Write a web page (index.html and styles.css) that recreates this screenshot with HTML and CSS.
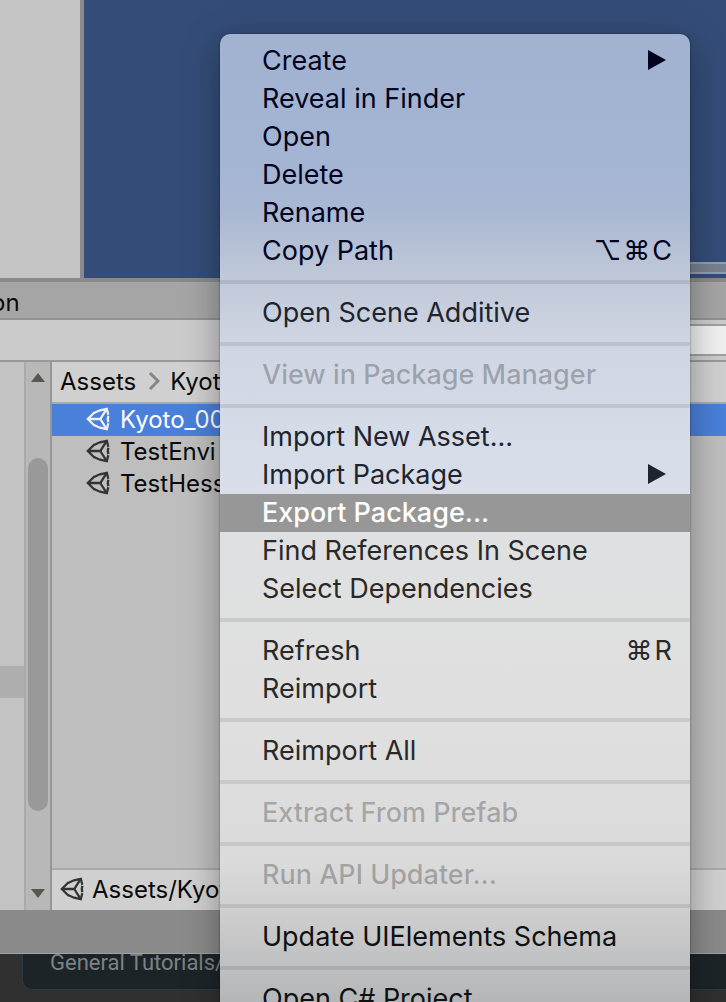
FILE: index.html
```
<!DOCTYPE html>
<html lang="en">
<head>
<meta charset="utf-8">
<title>Project</title>
<link rel="stylesheet" href="styles.css">
</head>
<body>
<svg class="defs" aria-hidden="true">
  <symbol id="unity" viewBox="0 0 24 24">
    <g fill="none" stroke="currentColor" stroke-width="2.3">
      <path d="M8 6 L14 3.300 L20.800 1.800 L22.300 7.800 M22.300 8.800 L21.800 12 L22.300 15.200 M22.300 16.200 L20.800 22.200 L14 20.700 L8 18"/>
      <path d="M8.600 5.300 L1.800 12 L8.600 18.700"/>
      <path d="M2 12 H14.300 L20.500 2.200 M14.300 12 L20.500 21.800"/>
    </g>
  </symbol>
  <symbol id="submenu" viewBox="0 0 18 20"><path d="M0 0 L18 10 L0 20 Z" fill="currentColor"/></symbol>
</svg>
<main class="desktop">
  <section class="viewport">
    <div class="hierarchy"></div>
    <div class="scene"><div class="scene-bar"></div></div>
  </section>
  <header class="tabs"><span class="tab">on</span></header>
  <div class="toolbar"><input class="search" type="text" aria-label="Search"></div>
  <section class="project">
    <div class="folders"><div class="folder-selected"></div></div>
    <div class="scrollbar">
      <svg class="arrow" viewBox="0 0 14 10"><path d="M7 0 L14 9 H0 Z" fill="#57574f"/></svg>
      <div class="track"><div class="thumb"></div></div>
      <svg class="arrow" viewBox="0 0 14 10"><path d="M0 0 H14 L7 9 Z" fill="#57574f"/></svg>
    </div>
    <div class="files">
      <nav class="crumbs"><a href="#assets">Assets</a><svg class="chevron" viewBox="0 0 12 18"><path d="M2 1 L10 9 L2 17" fill="none" stroke="#858585" stroke-width="3"/></svg><a href="#kyoto">Kyoto</a></nav>
      <ul class="file-list">
        <li class="file selected"><svg class="unity"><use href="#unity"/></svg>Kyoto_00</li>
        <li class="file"><svg class="unity"><use href="#unity"/></svg>TestEnvi</li>
        <li class="file"><svg class="unity"><use href="#unity"/></svg>TestHess</li>
      </ul>
      <div class="path"><svg class="unity"><use href="#unity"/></svg>Assets/Kyoto</div>
    </div>
  </section>
  <div class="status"></div>
  <footer class="backdrop"><div class="card">General Tutorials/</div></footer>

  <div class="menu" role="menu">
    <button class="item" role="menuitem">Create<svg class="sub"><use href="#submenu"/></svg></button>
    <button class="item" role="menuitem">Reveal in Finder</button>
    <button class="item" role="menuitem">Open</button>
    <button class="item" role="menuitem">Delete</button>
    <button class="item" role="menuitem">Rename</button>
    <button class="item" role="menuitem">Copy Path<kbd><span>⌥</span><span>⌘</span><span>C</span></kbd></button>
    <hr>
    <button class="item soft" role="menuitem">Open Scene Additive</button>
    <hr>
    <button class="item" role="menuitem" disabled>View in Package Manager</button>
    <hr>
    <button class="item soft" role="menuitem">Import New Asset...</button>
    <button class="item soft" role="menuitem">Import Package<svg class="sub"><use href="#submenu"/></svg></button>
    <button class="item active" role="menuitem">Export Package...</button>
    <button class="item neutral" role="menuitem">Find References In Scene</button>
    <button class="item neutral" role="menuitem">Select Dependencies</button>
    <hr>
    <button class="item neutral" role="menuitem">Refresh<kbd><span>⌘</span><span>R</span></kbd></button>
    <button class="item neutral" role="menuitem">Reimport</button>
    <hr>
    <button class="item neutral" role="menuitem">Reimport All</button>
    <hr>
    <button class="item" role="menuitem" disabled>Extract From Prefab</button>
    <hr>
    <button class="item" role="menuitem" disabled>Run API Updater...</button>
    <hr>
    <button class="item dark" role="menuitem">Update UIElements Schema</button>
    <hr>
    <button class="item dark" role="menuitem">Open C# Project</button>
  </div>
</main>
</body>
</html>
```
FILE: styles.css
```
* { box-sizing: border-box; }
body { margin: 0; font-family: Inter, "Liberation Sans", sans-serif; font-size: 24px; color: #090909; }
.defs { position: absolute; width: 0; height: 0; }
.desktop { position: relative; display: flex; flex-direction: column; height: 100vh; overflow: hidden; background: #333; }
.viewport { display: flex; height: 278px; flex: none; }
.hierarchy { width: 84px; background: #c5c5c5; border-right: 4px solid #8a8a8a; }
.scene { flex: 1; display: flex; flex-direction: column; justify-content: flex-end; align-items: flex-end; padding-bottom: 4px; background: #344d78; }
.scene-bar { width: 30%; height: 12px; background: #78818f; border: solid #929eb1; border-width: 2px 0; }
.tabs { flex: none; height: 42px; display: flex; align-items: center; padding-top: 6px; background: #a5a5a5; border-top: 4px solid #8a8a8a; border-bottom: 2px solid #929292; }
.tab { margin-left: -9px; line-height: 32px; }
.toolbar { flex: none; height: 42px; display: flex; justify-content: flex-end; align-items: center; background: #cbcbcb; border-bottom: 2px solid #999; }
.search { width: 30%; height: 32px; border: solid #a0a0a0; border-width: 2px 0; background: #f0f0f0; font: inherit; }
.project { flex: 1; min-height: 0; display: flex; }
.folders { width: 26px; background: #c3c3c3; border-right: 2px solid #aaa; padding-top: 304px; }
.folder-selected { height: 32px; background: #aeaeae; }
.scrollbar { width: 26px; display: flex; flex-direction: column; align-items: center; padding: 11px 0; background: #b8b8b8; border-right: 2px solid #969696; }
.arrow { flex: none; width: 14px; height: 10px; }
.track { flex: 1; padding-top: 75px; }
.thumb { width: 20px; height: 353px; border-radius: 10px; background: #999; }
.files { flex: 1; min-width: 0; display: flex; flex-direction: column; background: #bebebe; }
.crumbs { display: flex; align-items: center; height: 42px; padding: 0 8px 2px; background: #d0d0d0; border-bottom: 2px solid #aaa; }
.crumbs a { color: inherit; text-decoration: none; }
.chevron { width: 12px; height: 18px; margin: 0 10px 0 12px; }
.file-list { flex: 1; margin: 0; padding: 0; list-style: none; }
.file { display: flex; align-items: center; gap: 10px; height: 32px; padding-left: 34px; line-height: 34px; }
.unity { width: 24px; height: 24px; color: #333; }
.file .unity { margin-bottom: 2px; }
.selected { background: #4a80d9; color: #fff; }
.selected .unity { color: #f0f0f0; }
.path { display: flex; align-items: center; gap: 8px; height: 42px; padding: 0 8px 2px; background: #d0d0d0; border-top: 2px solid #aaa; }
.status { flex: none; height: 44px; background: #8a8a8a; border-bottom: 1px solid #9ea5a0; }
.backdrop { flex: none; height: 48px; padding-left: 22px; background: #303030; }
.card { height: 36px; padding: 0 27px; line-height: 18px; background: #1d2428; border: solid #30383c; border-width: 0 0 1px 1px; border-radius: 0 0 0 10px; color: #7c8385; font-family: Roboto, sans-serif; font-size: 22px; }

.menu { position: absolute; top: 34px; left: 220px; width: 470px; padding: 8px 0; border-radius: 10px; overflow: hidden;
  background: linear-gradient(#a2b3d2 0, #a4b4d3 130px, #aab8d3 180px, #bfc8d8 240px, #cfd5e2 310px, #d5dce8 400px, #d9dee8 460px, #dfe0e1 500px, #dfdfdf 700px, #dadada 830px, #cbcbcc 890px, #b3b5b6 970px);
  box-shadow: 0 0 2px rgba(0,0,0,.5), 0 10px 36px rgba(0,0,0,.35); }
.item { display: flex; align-items: center; width: 100%; height: 38px; padding: 0 18px 0 42px; border: 0; background: none; font: 400 27px/38px Inter, "Liberation Sans", sans-serif; color: #020420; text-align: left; white-space: nowrap; }
.item:disabled { color: rgba(0,0,0,.26); font-weight: 500; }
.soft { color: #20242e; }
.neutral { color: #292929; }
.dark { color: #0e1011; }
.active { background: #979797; color: #fff; font-weight: 500; }
.menu hr { height: 4px; margin: 10px 0; border: 0; background: rgba(0,0,0,.09); }
.sub { width: 18px; height: 20px; margin: 0 6px 2px auto; }
kbd { display: flex; gap: 2px; margin-left: auto; font: inherit; }
```
